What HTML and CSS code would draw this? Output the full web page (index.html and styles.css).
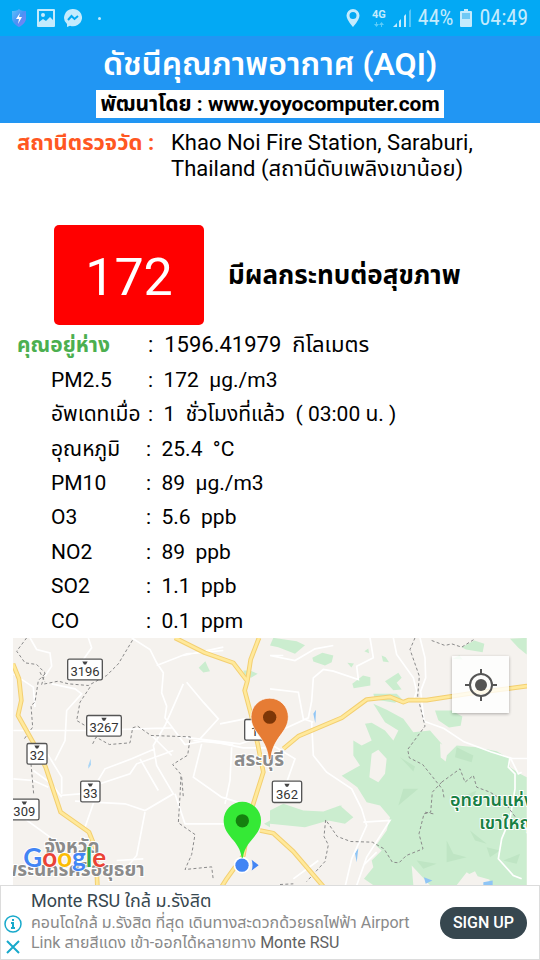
FILE: index.html
```html
<!DOCTYPE html>
<html lang="th">
<head>
    <meta charset="UTF-8">
    <meta name="viewport" content="width=device-width, initial-scale=1.0">
    <title>ดัชนีคุณภาพอากาศ (AQI)</title>
    <link rel="stylesheet" href="styles.css">
</head>
<body>

    <div class="status-bar">
        <svg width="16" height="18" viewBox="0 0 16 18">
            <defs>
                <linearGradient id="shield" x1="0" y1="0" x2="1" y2="1">
                    <stop offset="0" stop-color="#5cc4fb"/>
                    <stop offset="0.5" stop-color="#4a93f5"/>
                    <stop offset="1" stop-color="#8d7af2"/>
                </linearGradient>
            </defs>
            <path d="M8 0C6 2 3 2 1 2v7c0 4 3 7 7 9 4-2 7-5 7-9V2C13 2 10 2 8 0z" fill="url(#shield)"/>
            <path d="M9 4L5 10h3l-1 5 4-7H8z" fill="#fff"/>
        </svg>
        <svg class="picture" width="18" height="18" viewBox="0 0 18 18">
            <path fill="#c4ebfd" fill-rule="evenodd" d="M1 0h16q1 0 1 1v16q0 1-1 1H1q-1 0-1-1V1q0-1 1-1zM2 2v11l4-3 3 2 4-4 3 3V2z"/>
            <circle cx="6" cy="6" r="2" fill="#c4ebfd"/>
        </svg>
        <svg width="18" height="18" viewBox="0 0 18 18">
            <path fill="#c4ebfd" d="M9 0a9 8.600 0 1 1-3 16.700L3 18v-3A8.600 8.600 0 0 1 9 0z"/>
            <path d="M4 11l3.500-4 3 3L14 7" fill="none" stroke="#03a9f4" stroke-width="2"/>
        </svg>
        <span class="dot"></span>
        <svg class="push" width="14" height="18" viewBox="0 0 14 18">
            <path fill="#c4ebfd" fill-rule="evenodd" d="M7 0a6.500 6.500 0 0 1 6.500 6.500C13.500 11 7 18 7 18S.5 11 .5 6.500A6.500 6.500 0 0 1 7 0zM7 3a3.500 3.500 0 1 0 0 7 3.500 3.500 0 0 0 0-7z"/>
        </svg>
        <div class="network">
            <span>4G</span>
            <svg width="10" height="5" viewBox="0 0 10 5">
                <path fill="#5ccbf8" d="M2 0h1v2h2L2.500 5 0 2h2zM7 5h1V3h2L7.500 0 5 3h2z"/>
            </svg>
        </div>
        <svg width="18" height="18" viewBox="0 0 18 18">
            <path fill="#c4ebfd" d="M0 18l4-4v4zM6 12l2-2v8H6zM11 7l2-2v13h-2z"/>
            <path fill="#57c6f7" d="M16 2l2-2v18h-2z"/>
        </svg>
        <span class="status-text">44%</span>
        <svg width="12" height="18" viewBox="0 0 12 18">
            <path fill="#c4ebfd" d="M4 0h4v2h3q1 0 1 1v14q0 1-1 1H1q-1 0-1-1V3q0-1 1-1h3z"/>
            <path fill="#6fc9f5" d="M2 4h8v6H2z"/>
        </svg>
        <span class="status-text">04:49</span>
    </div>

    <header class="header">
        <h1>ดัชนีคุณภาพอากาศ (AQI)</h1>
        <p class="developer">พัฒนาโดย : www.yoyocomputer.com</p>
    </header>

    <main class="contents">
        <div class="station">
            <h2>สถานีตรวจวัด :</h2>
            <p>Khao Noi Fire Station, Saraburi, Thailand (สถานีดับเพลิงเขาน้อย)</p>
        </div>

        <div class="result">
            <div class="aqi">172</div>
            <strong>มีผลกระทบต่อสุขภาพ</strong>
        </div>

        <table class="detail">
            <tbody class="main-detail">
                <tr class="distance"><th scope="row">คุณอยู่ห่าง</th><td>:  1596.41979  กิโลเมตร</td></tr>
                <tr><th scope="row">PM2.5</th><td>:  172  µg./m3</td></tr>
                <tr><th scope="row">อัพเดทเมื่อ</th><td>:  1  ชั่วโมงที่แล้ว  ( 03:00 น. )</td></tr>
            </tbody>
            <tbody>
                <tr><th scope="row">อุณหภูมิ</th><td>:  25.4  °C</td></tr>
                <tr><th scope="row">PM10</th><td>:  89  µg./m3</td></tr>
                <tr><th scope="row">O3</th><td>:  5.6  ppb</td></tr>
                <tr><th scope="row">NO2</th><td>:  89  ppb</td></tr>
                <tr><th scope="row">SO2</th><td>:  1.1  ppb</td></tr>
                <tr><th scope="row">CO</th><td>:  0.1  ppm</td></tr>
            </tbody>
        </table>

        <div class="map">
            <svg class="map-canvas" viewBox="39 22 1542 742" preserveAspectRatio="xMidYMid slice">
                <defs>
                    <path id="highways" d="M39 100l18 45 7 65-10 45 45 80 38 75 45 135 85 60 20 50 5 109M525 22l90 45 85 30 42 55 10-65 25-65M742 152l-8 28 20 75 20 90 16 80-35 110-25 140-50 70-35 55M850 355l45-38 130-55 75-55 70-8 40 16 15-6 55 0 130-20 170-22 61-16M780 600l40 8 60 55 90 105"/>
                </defs>
                <rect x="39" y="22" width="1542" height="742" fill="#f5f2ee"/>

                <!-- forest -->
                <g transform="translate(810 0)" fill="#cbedcf">
                    <path d="M10 22l70 10 25 12-30 26-50-20-25-5zM127 82l30-15 33 8-5 20-20 10-35-12zM247 160l32-25 22 5v25l-50 8zM345 152l40-25 10 15-15 15 15 20-25 2zM335 75l12 5 10 15-18-2zM232 97l20 2-8 12zM283 62l12-8 2 14zM575 50l38-20 30 10-5 25-50-8zM720 25l50-3v50l-25-20zM495 240l50 0 32 18-5 28-35 5-32-22zM548 85l20-10 10 12z"/>
                    <path fill-rule="evenodd" d="M310 220L350 238L400 265L430 305L480 300L515 340L530 375L560 345L620 350L680 362L720 385L720 410L750 430L770 440V764H650L590 725L560 764H480L425 705L430 764H310L282 745L310 710L305 690L335 660L318 645L350 600L360 560L330 525L290 515L262 470L215 436L270 405L250 375V330L275 345L305 330L285 280L305 277L345 300L370 330L385 300L345 275zM305 370L325 358L350 385L345 430L325 455L298 440z"/>
                    <path d="M310 190h70l15 15-20 12-60-10zM0 540l40-20 60 20 60 3 50-18 40 35-25 20-50-10-70 20-105-10zM195 530l20-5-5 18z"/>
                    <path fill="#f5f2ee" d="M510 338l25 15-8 40-15-12zM580 764l10-30 25-12 8 15 35 10 5 17z"/>
                    <path fill="#bfe5c4" d="M390 380l45 28-5 15zM400 475l45 0-60 50zM560 350l50 25-5 20-50-15zM530 630l20 40 40 10-60 15zM600 600l50 40-35-10zM440 690l60 10-40 15zM570 500l50-20-20 40zM650 650l40 10-30 20zM700 690l50-20-10 30z"/>
                    <path fill="#8fc5f5" d="M130 250l8-12-2 40zM255 668l10-15-5 42zM462 740l25 10-20 10zM640 755l28-5v14h-28z"/>
                </g>
                <path fill="#cbedcf" d="M596 112l20-20 8 18 6 12-20 4zM730 120l20 0 23 10-20 12-20-10zM792 580l18-10v20z"/>
                <path fill="#a8d5f6" d="M265 405l7-20 1 18-8 12z"/>

                <!-- small roads -->
                <g class="lane">
                    <path d="M90 22l20 35 40 10 5 40-20 30M265 22l10 30-25 35M395 22l55 35 20 40 20 30-5 60 15 40-5 35 60 80 65-12 110 22 70 0M550 160l-55 125-35 60 10 60 50 85-85 50-60-20-150-8M550 75l120-25M470 105l90-35 110-10M560 155l50 60 45 50-55 60M40 300l215 0 260-8M155 160l70 15 20 15-45 50-5 90-30 60M130 350l55 90 0 50M270 490l45-75 80-30 70-30M300 460l90-30 20-30 110-40M255 590l30-85M550 320l170 20 30-10M605 340l-25 100 85 60 65 20M695 350l-5 100-15 70M525 490l30 90 130 0M435 545l-25 130-50 60M40 540l110 80M100 420l55 40 30 40"/>
                    <path d="M180 495l60-5M40 445l60 5 45 20M420 385l55 95M455 315l60 60M580 330l120 12M40 130l60 40 5 60M350 690l80-5M660 280l75-15"/>
                    <g transform="translate(810 0)">
                        <path d="M0 75l75 15 60-35 55-10M300 22l10 60-50 25 5 40-75-25-30-5-30 25-5 70-10 50-65 30-40 15M0 175l85 10 15 80 30 10M125 275l5 100 40 50 75 50 30 60 15 50-45 100-20 85M280 575l80-5-70 110-30 85M370 22l10 50 50 70 10 40-10 30M450 22l15 60 2 60-15 40 10 90 60 22 60 40 80 30 65 20 60 0M720 380l-5 30 20 20 0 45-15 90-25 60-10 60 45 50 25 10M720 380l25 50 10-5M320 665l-40 40M0 340l75 45-25 70M0 75h40M70 745l75-55"/>
                    </g>
                </g>

                <!-- province borders -->
                <g class="border">
                    <path d="M80 22l-30 40 25 35 35 5 25 25-10 35 50-10 30 8 60 5 55-30 35-35 45-75M135 130l-20 20-10 65-12 10 5 65-25 35M120 125l15 30M270 170l-30 45-10 55 25 15M278 340l10-20 40 22 62-5 8-45 15-5 40 28 118 4-8 55-45 28 25 30-3 65-5 80 50 35-10 60-20 45 80-8 5 40M93 400l8 90M545 440l5 60"/>
                    <g transform="translate(810 0)">
                        <path d="M435 22l-15 35 28 80-5 60 22 90-52 70 5 25 40 20 60 75 5 30M515 455l-28 30-5 60-20 5-15 60 12 45-50 20-22 22-20-2-25-40-35-20-65-2-40-15-35-50-5 50 13 25-10 50-55 60M485 30l40 15 20-5 30 10 40-25M490 550l-25-5M515 455l55-40 15 40 25-20 10 35 40 15 40 25 40 55M30 762l40-2"/>
                    </g>
                </g>

                <!-- highways -->
                <use href="#highways" class="highway-edge"/>
                <use href="#highways" class="highway"/>

                <!-- road signs -->
                <g class="sign">
                    <rect x="203" y="86" width="104" height="62" rx="5"/>
                    <rect x="260" y="255" width="104" height="62" rx="5"/>
                    <rect x="81" y="339" width="60" height="62" rx="5"/>
                    <rect x="242" y="452" width="58" height="62" rx="5"/>
                    <rect x="30" y="506" width="87" height="62" rx="5"/>
                    <rect x="734" y="267" width="60" height="62" rx="5"/>
                    <rect x="817" y="452" width="88" height="64" rx="5"/>
                </g>
                <path fill="#444" d="M247 93h16l-5 9h-6zM304 262h16l-5 9h-6zM103 345h16l-5 9h-6zM263 459h16l-5 9h-6zM65 513h16l-5 9h-6zM853 460h16l-5 9h-6z"/>
                <g class="sign-text">
                    <text x="255" y="136">3196</text>
                    <text x="312" y="305">3267</text>
                    <text x="111" y="388">32</text>
                    <text x="271" y="501">33</text>
                    <text x="73" y="556">309</text>
                    <text x="764" y="316">1</text>
                    <text x="861" y="504">362</text>
                </g>

                <!-- place names -->
                <g class="place">
                    <text x="777" y="407">สระบุรี</text>
                    <text x="216" y="667">จังหวัด</text>
                    <text x="222" y="736">พระนครศรีอยุธยา</text>
                </g>
                <g class="park">
                    <text x="1350" y="527">อุทยานแห่งชาติ</text>
                    <text x="1438" y="595">เขาใหญ่</text>
                </g>

                <!-- station pin -->
                <path fill="#e67c34" stroke="#fff" stroke-width="2" d="M809 203a56 56 0 0 1 56 56c0 48-47 60-53 128h-6c-6-68-53-80-53-128a56 56 0 0 1 56-56z"/>
                <circle cx="809" cy="260" r="20" fill="#7d3607"/>

                <!-- my position -->
                <circle cx="726" cy="704" r="25" fill="#fff"/>
                <circle cx="726" cy="704" r="20" fill="#4285f4"/>
                <path fill="#4285f4" d="M755 688l21 16-21 16q5-16 0-32z"/>
                <path fill="#35e936" d="M727 514a56 56 0 0 1 56 56c0 48-49 60-54 112h-4c-5-52-54-64-54-112a56 56 0 0 1 56-56z"/>
                <circle cx="727" cy="571" r="20" fill="#15800f"/>

                <text class="logo" x="70" y="710"><tspan fill="#4285f4">G</tspan><tspan fill="#ea4335">o</tspan><tspan fill="#fbbc05">o</tspan><tspan fill="#4285f4">g</tspan><tspan fill="#34a853">l</tspan><tspan fill="#ea4335">e</tspan></text>
            </svg>
            <button class="locate" type="button" aria-label="ตำแหน่งของฉัน">
                <svg width="32" height="32" viewBox="0 0 32 32">
                    <circle cx="16" cy="16" r="11" fill="none" stroke="#555" stroke-width="2"/>
                    <circle cx="16" cy="16" r="6" fill="#555"/>
                    <path d="M16 0v5M16 27v5M0 16h5M27 16h5" stroke="#555" stroke-width="2"/>
                </svg>
            </button>
        </div>
    </main>

    <aside class="ad">
        <div class="ad-icons">
            <button type="button" aria-label="ข้อมูลโฆษณา">
                <svg width="18" height="18" viewBox="0 0 18 18">
                    <circle cx="9" cy="9" r="8" fill="none" stroke="#18a9cb" stroke-width="1.500"/>
                    <path d="M9 4v2M7 8h2v5M7 13h4" fill="none" stroke="#18a9cb" stroke-width="2"/>
                </svg>
            </button>
            <button type="button" aria-label="ปิดโฆษณา">
                <svg width="18" height="18" viewBox="0 0 18 18">
                    <path d="M3 3l12 12M15 3L3 15" stroke="#18a9cb" stroke-width="2"/>
                </svg>
            </button>
        </div>
        <div class="ad-text">
            <h3>Monte RSU ใกล้ ม.รังสิต</h3>
            <p>คอนโดใกล้ ม.รังสิต ที่สุด เดินทางสะดวกด้วยรถไฟฟ้า Airport Link สายสีแดง เข้า-ออกได้หลายทาง <b>Monte RSU</b></p>
        </div>
        <a class="sign-up" href="#">SIGN UP</a>
    </aside>

</body>
</html>
```
FILE: styles.css
```css
* {
  box-sizing: border-box;
}

body {
  margin: 0;
  min-height: 100vh;
  display: flex;
  flex-direction: column;
  font-family: Roboto, "Noto Sans Thai", "Noto Sans", sans-serif;
  font-size: 22px;
  line-height: 26px;
  color: #000;
  background: #fff;
}

h1, h2, h3, p {
  margin: 0;
}

button {
  border: 0;
  padding: 0;
  background: none;
}

svg {
  display: block;
}

.status-bar {
  display: flex;
  align-items: center;
  gap: 7px;
  height: 36px;
  padding: 0 12px 0 11px;
  background: #03a9f4;
  color: #c4ebfd;
}

.picture {
  margin: 0 2px 0 3px;
}

.dot {
  width: 3px;
  height: 3px;
  margin-left: 9px;
  border-radius: 50%;
  background: #c4ebfd;
}

.push {
  margin-left: auto;
}

.network {
  display: flex;
  flex-direction: column;
  align-items: center;
  gap: 2px;
  padding-left: 5px;
  font-size: 11px;
  font-weight: bold;
  line-height: 10px;
}

.status-text {
  font-family: "Roboto Condensed", Roboto, sans-serif;
  font-size: 22px;
}

.header {
  display: flex;
  flex-direction: column;
  align-items: center;
  gap: 6px;
  height: 87px;
  padding-top: 8px;
  background: #2196f3;
}

.header h1 {
  color: #fff;
  font-size: 32px;
  font-weight: 600;
  line-height: 40px;
}

.developer {
  padding: 0 4px;
  background: #fff;
  font-size: 21px;
  font-weight: bold;
  line-height: 28px;
}

.contents {
  flex: 1;
  display: flex;
  flex-direction: column;
}

.station {
  display: grid;
  grid-template-columns: 142px 1fr;
  gap: 12px;
  height: 102px;
  padding: 7px 40px 0 17px;
}

.station h2 {
  color: #ff5722;
  font-size: 22px;
  white-space: nowrap;
}

.result {
  display: flex;
  align-items: center;
  gap: 24px;
  padding-left: 54px;
}

.result strong {
  font-size: 26px;
}

.aqi {
  width: 150px;
  padding-top: 6px;
  border-radius: 5px;
  background: #f00;
  color: #fff;
  font-size: 52px;
  line-height: 94px;
  text-align: center;
}

.detail {
  height: 310px;
  margin-top: 3px;
  border-collapse: collapse;
  font-size: 21px;
}

.detail th {
  width: 146px;
  padding: 0 0 0 51px;
  font-weight: normal;
  text-align: left;
  white-space: nowrap;
}

.detail td {
  padding: 0;
  white-space: pre;
}

.main-detail td {
  padding-left: 2px;
}

.detail .distance {
  font-size: 22px;
}

.detail .distance th {
  padding-left: 17px;
  color: #4caf50;
  font-size: 21px;
  font-weight: bold;
}

.map {
  position: relative;
  flex: 1;
  min-height: 240px;
  margin: 0 13px;
}

.map-canvas {
  position: absolute;
  width: 100%;
  height: 100%;
}

.lane {
  fill: none;
  stroke: #fff;
  stroke-width: 5px;
}

.border {
  fill: none;
  stroke: #8a8a8a;
  stroke-width: 3px;
  stroke-dasharray: 9 7;
}

.highway-edge {
  fill: none;
  stroke: #f3cf71;
  stroke-width: 14px;
  stroke-linejoin: round;
}

.highway {
  fill: none;
  stroke: #ffe99b;
  stroke-width: 8px;
  stroke-linejoin: round;
}

.sign {
  fill: #fff;
  stroke: #555;
  stroke-width: 4px;
}

.sign-text {
  fill: #333;
  font-size: 39px;
  text-anchor: middle;
}

.place {
  fill: #8b8b8b;
  stroke: #fff;
  stroke-width: 6px;
  paint-order: stroke;
  font-size: 57px;
  font-weight: bold;
  text-anchor: middle;
}

.park {
  fill: #188044;
  stroke: #fff;
  stroke-width: 6px;
  paint-order: stroke;
  font-size: 54px;
  font-weight: 600;
}

.logo {
  stroke: #fff;
  stroke-width: 5px;
  paint-order: stroke;
  font-family: Lato, sans-serif;
  font-size: 78px;
  font-weight: bold;
}

.locate {
  position: absolute;
  top: 18px;
  right: 18px;
  display: grid;
  place-items: center;
  width: 57px;
  height: 57px;
  background: rgba(255, 255, 255, 0.8);
  box-shadow: 0 1px 3px rgba(0, 0, 0, 0.3);
}

.ad {
  display: flex;
  align-items: center;
  height: 75px;
  padding-right: 12px;
  border: 1px solid #dcdcdc;
  background: #fff;
}

.ad-icons {
  display: grid;
  gap: 5px;
  align-self: end;
  width: 30px;
  padding: 0 0 3px 3px;
}

.ad-text {
  flex: 1;
  padding-bottom: 4px;
}

.ad-text h3 {
  color: #37474f;
  font-size: 18px;
  font-weight: normal;
  line-height: 24px;
}

.ad-text p {
  max-width: 392px;
  color: #8a8a8a;
  font-size: 16px;
  line-height: 20px;
}

.ad-text b {
  color: #616161;
  font-weight: normal;
}

.sign-up {
  padding: 0 13px;
  border-radius: 16px;
  background: #37474f;
  color: #fff;
  font-size: 16px;
  font-weight: 500;
  line-height: 32px;
  text-decoration: none;
  white-space: nowrap;
}
```
